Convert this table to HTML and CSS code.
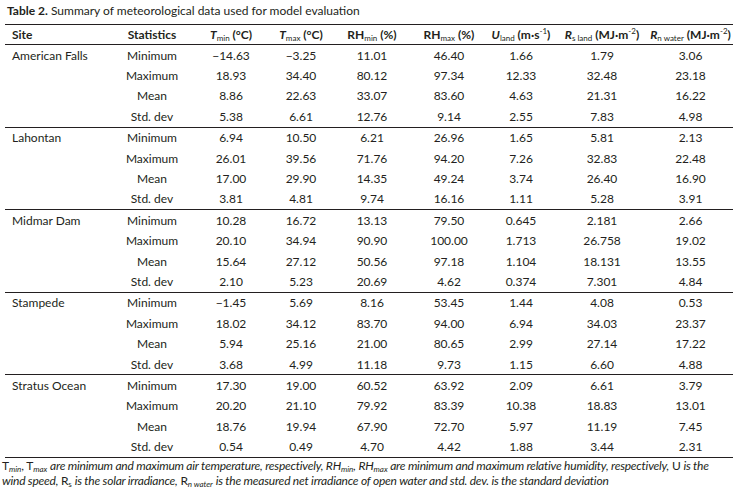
FILE: index.html
```html
<!DOCTYPE html>
<html>
<head>
<meta charset="utf-8">
<link rel="stylesheet" href="styles.css">
</head>
<body>
<div class="page">
  <p class="caption"><b>Table 2.</b> Summary of meteorological data used for model evaluation</p>
  <table class="data">
    <colgroup>
      <col class="c-site"><col class="c-stat"><col class="c-tmin"><col class="c-tmax"><col class="c-rhmin"><col class="c-rhmax"><col class="c-u"><col class="c-rs"><col class="c-rn">
    </colgroup>
    <thead>
      <tr>
        <th class="left">Site</th>
        <th>Statistics</th>
        <th><i>T</i><sub>min</sub> (°C)</th>
        <th><i>T</i><sub>max</sub> (°C)</th>
        <th>RH<sub>min</sub> (%)</th>
        <th>RH<sub>max</sub> (%)</th>
        <th><i>U</i><sub>land</sub> (m·s<sup>-1</sup>)</th>
        <th><i>R</i><sub>s land</sub> (MJ·m<sup>-2</sup>)</th>
        <th><i>R</i><sub>n water</sub> (MJ·m<sup>-2</sup>)</th>
      </tr>
    </thead>
    <tbody>
      <tr><td class="left">American Falls</td><td>Minimum</td><td>−14.63</td><td>−3.25</td><td>11.01</td><td>46.40</td><td>1.66</td><td>1.79</td><td>3.06</td></tr>
      <tr><td></td><td>Maximum</td><td>18.93</td><td>34.40</td><td>80.12</td><td>97.34</td><td>12.33</td><td>32.48</td><td>23.18</td></tr>
      <tr><td></td><td>Mean</td><td>8.86</td><td>22.63</td><td>33.07</td><td>83.60</td><td>4.63</td><td>21.31</td><td>16.22</td></tr>
      <tr class="end"><td></td><td>Std. dev</td><td>5.38</td><td>6.61</td><td>12.76</td><td>9.14</td><td>2.55</td><td>7.83</td><td>4.98</td></tr>
    </tbody>
    <tbody>
      <tr><td class="left">Lahontan</td><td>Minimum</td><td>6.94</td><td>10.50</td><td>6.21</td><td>26.96</td><td>1.65</td><td>5.81</td><td>2.13</td></tr>
      <tr><td></td><td>Maximum</td><td>26.01</td><td>39.56</td><td>71.76</td><td>94.20</td><td>7.26</td><td>32.83</td><td>22.48</td></tr>
      <tr><td></td><td>Mean</td><td>17.00</td><td>29.90</td><td>14.35</td><td>49.24</td><td>3.74</td><td>26.40</td><td>16.90</td></tr>
      <tr class="end"><td></td><td>Std. dev</td><td>3.81</td><td>4.81</td><td>9.74</td><td>16.16</td><td>1.11</td><td>5.28</td><td>3.91</td></tr>
    </tbody>
    <tbody>
      <tr><td class="left">Midmar Dam</td><td>Minimum</td><td>10.28</td><td>16.72</td><td>13.13</td><td>79.50</td><td>0.645</td><td>2.181</td><td>2.66</td></tr>
      <tr><td></td><td>Maximum</td><td>20.10</td><td>34.94</td><td>90.90</td><td>100.00</td><td>1.713</td><td>26.758</td><td>19.02</td></tr>
      <tr><td></td><td>Mean</td><td>15.64</td><td>27.12</td><td>50.56</td><td>97.18</td><td>1.104</td><td>18.131</td><td>13.55</td></tr>
      <tr class="end"><td></td><td>Std. dev</td><td>2.10</td><td>5.23</td><td>20.69</td><td>4.62</td><td>0.374</td><td>7.301</td><td>4.84</td></tr>
    </tbody>
    <tbody>
      <tr><td class="left">Stampede</td><td>Minimum</td><td>−1.45</td><td>5.69</td><td>8.16</td><td>53.45</td><td>1.44</td><td>4.08</td><td>0.53</td></tr>
      <tr><td></td><td>Maximum</td><td>18.02</td><td>34.12</td><td>83.70</td><td>94.00</td><td>6.94</td><td>34.03</td><td>23.37</td></tr>
      <tr><td></td><td>Mean</td><td>5.94</td><td>25.16</td><td>21.00</td><td>80.65</td><td>2.99</td><td>27.14</td><td>17.22</td></tr>
      <tr class="end"><td></td><td>Std. dev</td><td>3.68</td><td>4.99</td><td>11.18</td><td>9.73</td><td>1.15</td><td>6.60</td><td>4.88</td></tr>
    </tbody>
    <tbody>
      <tr><td class="left">Stratus Ocean</td><td>Minimum</td><td>17.30</td><td>19.00</td><td>60.52</td><td>63.92</td><td>2.09</td><td>6.61</td><td>3.79</td></tr>
      <tr><td></td><td>Maximum</td><td>20.20</td><td>21.10</td><td>79.92</td><td>83.39</td><td>10.38</td><td>18.83</td><td>13.01</td></tr>
      <tr><td></td><td>Mean</td><td>18.76</td><td>19.94</td><td>67.90</td><td>72.70</td><td>5.97</td><td>11.19</td><td>7.45</td></tr>
      <tr class="end"><td></td><td>Std. dev</td><td>0.54</td><td>0.49</td><td>4.70</td><td>4.42</td><td>1.88</td><td>3.44</td><td>2.31</td></tr>
    </tbody>
  </table>
  <p class="note">T<sub><i>min</i></sub>, T<sub><i>max</i></sub> <i>are minimum and maximum air temperature, respectively, RH<sub>min</sub>, RH<sub>max</sub> are minimum and maximum relative humidity, respectively,</i> U <i>is the</i><br><i>wind speed,</i> R<sub>s</sub> <i>is the solar irradiance,</i> R<sub><i>n water</i></sub> <i>is the measured net irradiance of open water and std. dev. is the standard deviation</i></p>
</div>
</body>
</html>
```

FILE: styles.css
```css
html, body {
  margin: 0;
  padding: 0;
  background: #ffffff;
}

body {
  font-family: Lato, "Open Sans", "Liberation Sans", sans-serif;
  font-size: 12px;
  color: #231f20;
}

.page {
  padding: 3px 0 0 5px;
  width: 740px;
}

.caption {
  margin: 0 0 0 2px;
  line-height: 15px;
  font-size: 12px;
}

.data {
  width: 728px;
  border-collapse: collapse;
  table-layout: fixed;
  margin-top: 6px;
  border-top: 1px solid #231f20;
  border-bottom: 1px solid #231f20;
}

.c-site { width: 107px; }
.c-stat { width: 80px; }
.c-tmin { width: 78px; }
.c-tmax { width: 62px; }
.c-rhmin { width: 80px; }
.c-rhmax { width: 74px; }
.c-u { width: 70px; }
.c-rs { width: 92px; }
.c-rn { width: 85px; }

.data th,
.data td {
  padding: 0;
  text-align: center;
  white-space: nowrap;
  font-weight: normal;
}

.data th {
  font-weight: bold;
  height: 19px;
  border-bottom: 1px solid #231f20;
  vertical-align: middle;
}

.data td {
  height: 20.4px;
  vertical-align: middle;
}

.data .left {
  text-align: left;
  padding-left: 7px;
}

.data th sub {
  font-size: 8px;
  font-weight: normal;
  vertical-align: -2px;
  line-height: 0;
}

.data th sup {
  font-size: 8px;
  font-weight: normal;
  vertical-align: 5px;
  line-height: 0;
}

.data tr.end td {
  border-bottom: 1px solid #231f20;
}

.note {
  margin: 0 0 0 -3px;
  line-height: 15px;
  font-size: 12px;
  letter-spacing: -0.22px;
  white-space: nowrap;
}

.note sub {
  font-size: 8px;
  letter-spacing: 0;
  vertical-align: -2px;
  line-height: 0;
}
```
